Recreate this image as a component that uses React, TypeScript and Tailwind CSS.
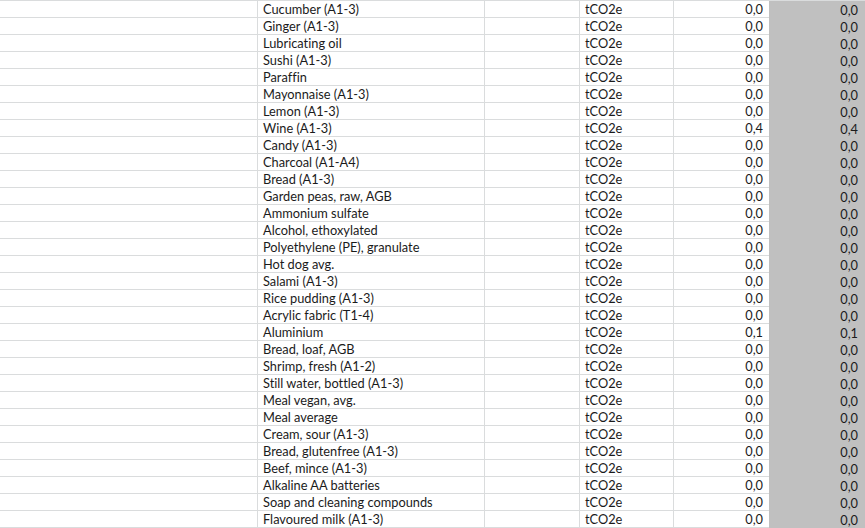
const rows: [string, string][] = [
  ["Cucumber (A1-3)", "0,0"],
  ["Ginger (A1-3)", "0,0"],
  ["Lubricating oil", "0,0"],
  ["Sushi (A1-3)", "0,0"],
  ["Paraffin", "0,0"],
  ["Mayonnaise (A1-3)", "0,0"],
  ["Lemon (A1-3)", "0,0"],
  ["Wine (A1-3)", "0,4"],
  ["Candy (A1-3)", "0,0"],
  ["Charcoal (A1-A4)", "0,0"],
  ["Bread (A1-3)", "0,0"],
  ["Garden peas, raw, AGB", "0,0"],
  ["Ammonium sulfate", "0,0"],
  ["Alcohol, ethoxylated", "0,0"],
  ["Polyethylene (PE), granulate", "0,0"],
  ["Hot dog avg.", "0,0"],
  ["Salami (A1-3)", "0,0"],
  ["Rice pudding (A1-3)", "0,0"],
  ["Acrylic fabric (T1-4)", "0,0"],
  ["Aluminium", "0,1"],
  ["Bread, loaf, AGB", "0,0"],
  ["Shrimp, fresh (A1-2)", "0,0"],
  ["Still water, bottled (A1-3)", "0,0"],
  ["Meal vegan, avg.", "0,0"],
  ["Meal average", "0,0"],
  ["Cream, sour (A1-3)", "0,0"],
  ["Bread, glutenfree (A1-3)", "0,0"],
  ["Beef, mince (A1-3)", "0,0"],
  ["Alkaline AA batteries", "0,0"],
  ["Soap and cleaning compounds", "0,0"],
  ["Flavoured milk (A1-3)", "0,0"],
];

export default function App() {
  return (
    <div
      className="w-[865px] h-[528px] overflow-hidden bg-white text-[#1b1b1b] text-[12.8px] leading-none border-t border-[#dadcdd] [font-variant-ligatures:none]"
      style={{ fontFamily: "Lato, 'Open Sans', sans-serif" }}
    >
      {rows.map(([name, value], i) => (
        <div key={i} className="flex h-[17px]">
          <div className="w-[258px] border-b border-r border-[#dadcdd]" />
          <div className="w-[227px] border-b border-r border-[#dadcdd] pl-[5px] pt-px flex items-center whitespace-nowrap">
            {name}
          </div>
          <div className="w-[95px] border-b border-r border-[#dadcdd]" />
          <div className="w-[94px] border-b border-r border-[#dadcdd] pl-[5px] pt-px flex items-center">
            tCO2e
          </div>
          <div className="w-[95px] border-b border-[#dadcdd] pr-[6px] pt-px flex items-center justify-end">
            {value}
          </div>
          <div className="flex-1 bg-[#c0c0c0] pr-[7px] pt-px flex items-center justify-end">
            {value}
          </div>
        </div>
      ))}
    </div>
  );
}
